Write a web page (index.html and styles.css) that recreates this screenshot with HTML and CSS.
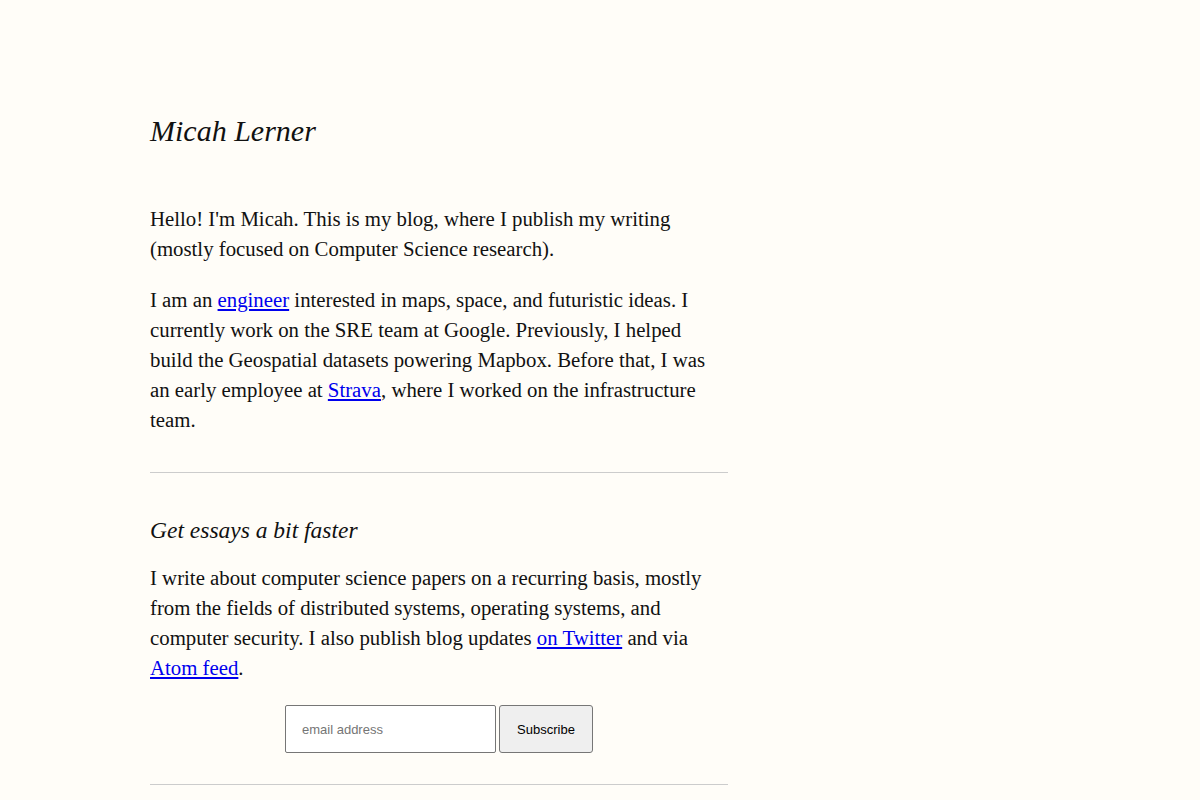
FILE: index.html
```html
<!DOCTYPE html>
<html lang="en">
<head>
<meta charset="utf-8">
<title>Micah Lerner</title>
<link rel="stylesheet" href="styles.css">
</head>
<body>
<main class="page">
  <header class="site-header">
    <h1 class="site-title">Micah Lerner</h1>
  </header>
  <section class="intro">
    <p>Hello! I'm Micah. This is my blog, where I publish my writing (mostly focused on Computer Science research).</p>
    <p>I am an <a href="#">engineer</a> interested in maps, space, and futuristic ideas. I currently work on the SRE team at Google. Previously, I helped build the Geospatial datasets powering Mapbox. Before that, I was an early employee at <a href="#">Strava</a>, where I worked on the infrastructure team.</p>
  </section>
  <hr class="rule">
  <section class="signup">
    <h2 class="signup-title">Get essays a bit faster</h2>
    <p>I write about computer science papers on a recurring basis, mostly from the fields of distributed systems, operating systems, and computer security. I also publish blog updates <a href="#">on Twitter</a> and via <a href="#">Atom feed</a>.</p>
    <form class="signup-form">
      <input class="email" type="email" placeholder="email address">
      <button class="subscribe" type="button">Subscribe</button>
    </form>
  </section>
  <hr class="rule rule-end">
</main>
</body>
</html>
```

FILE: styles.css
```css
html, body {
  margin: 0;
  padding: 0;
  background: #fffdf8;
}

body {
  font-family: "Liberation Serif", "Times New Roman", serif;
  color: #111;
}

.page {
  width: 578px;
  margin-left: 150px;
  padding-top: 108px;
}

.site-title {
  margin: 0;
  font-style: italic;
  font-weight: normal;
  font-size: 30px;
  line-height: 46px;
}

.intro {
  margin-top: 50px;
}

.intro p,
.signup p {
  margin: 0 0 21px;
  font-size: 20.8px;
  line-height: 30px;
}

.intro p:last-child {
  margin-bottom: 0;
}

a {
  color: #0000ee;
}

.rule {
  border: none;
  border-top: 1px solid #ccc;
  margin: 37px 0 0;
}

.signup {
  padding-top: 39px;
}

.signup-title {
  margin: 0 0 15px;
  font-style: italic;
  font-weight: normal;
  font-size: 23.5px;
  line-height: 36px;
}

.signup p {
  margin-bottom: 22px;
}

.signup-form {
  display: flex;
  justify-content: center;
  gap: 3px;
}

.rule-end {
  margin-top: 31px;
}

.email {
  box-sizing: border-box;
  width: 211px;
  height: 48px;
  padding: 0 16px;
  border: 1px solid #767676;
  border-radius: 2px;
  background: #fff;
  font-family: "Liberation Sans", Arial, sans-serif;
  font-size: 13px;
}

.email::placeholder {
  color: #757575;
}

.subscribe {
  box-sizing: border-box;
  width: 94px;
  height: 48px;
  border: 1px solid #767676;
  border-radius: 3px;
  background: #efefef;
  color: #000;
  font-family: "Liberation Sans", Arial, sans-serif;
  font-size: 13px;
}
```
